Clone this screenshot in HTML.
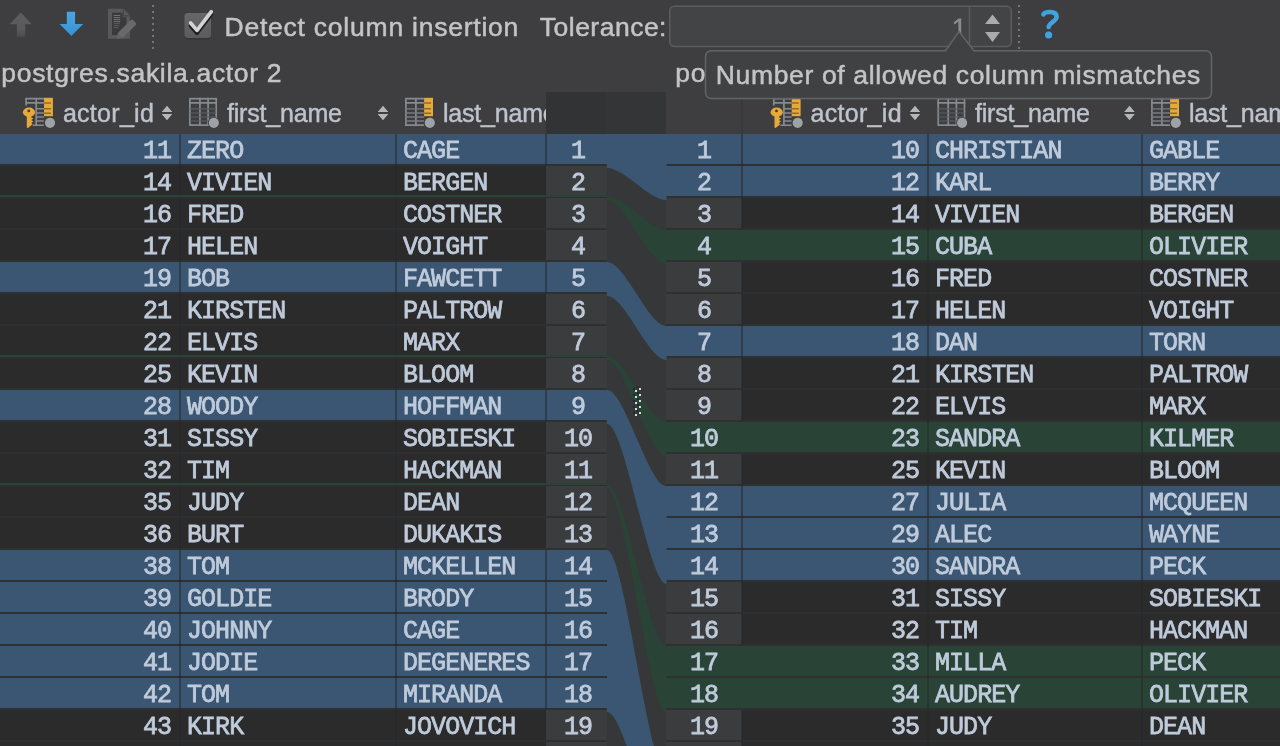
<!DOCTYPE html>
<html><head><meta charset="utf-8"><title>diff</title>
<style>
html,body{margin:0;padding:0;overflow:hidden}
body{width:1280px;height:746px;overflow:hidden;background:#3e3e40;position:relative;font-family:"Liberation Sans",sans-serif;color:#bbbbbb}
.a{position:absolute}
.t{position:absolute;white-space:nowrap;font-size:26.5px;line-height:30px;letter-spacing:.7px;color:#c4c4c4;-webkit-text-stroke:.5px #c4c4c4}
.h{position:absolute;white-space:nowrap;font-size:25px;line-height:30px;color:#bdc3cc;letter-spacing:-.2px;-webkit-text-stroke:.45px #bdc3cc}
.c{position:absolute;white-space:nowrap;font-family:"Liberation Mono",monospace;font-size:25px;line-height:30px;letter-spacing:-.95px;color:#bfcbdb;height:30px;margin-top:2.5px;transform:scaleY(1);transform-origin:0 21.65px;-webkit-text-stroke:.76px #bfcbdb}
.r{text-align:right}
.n{text-align:center;letter-spacing:-.9px}
.row{position:absolute;left:0;height:30px}
</style></head><body><div id="w" style="position:absolute;left:0;top:0;width:1280px;height:746px;overflow:hidden;will-change:transform">

<div class="a" style="left:0;top:134px;width:547px;height:612px;background:#2b2b2b"></div>
<div class="a" style="left:545.5px;top:134px;width:61.5px;height:612px;background:#3b3c3d"></div>
<div class="a" style="left:607px;top:134px;width:59px;height:612px;background:#363738"></div>
<div class="a" style="left:666px;top:134px;width:76px;height:612px;background:#3b3c3d"></div>
<div class="a" style="left:742px;top:134px;width:538px;height:612px;background:#2b2b2b"></div>
<div class="a" style="left:546px;top:92px;width:60px;height:42px;background:#323335"></div>
<div class="a" style="left:606px;top:92px;width:60px;height:42px;background:#343537"></div>
<div class="a" style="left:0;top:134px;width:607px;height:30px;background:#3a5672"></div>
<div class="a" style="left:0;top:262px;width:607px;height:30px;background:#3a5672"></div>
<div class="a" style="left:0;top:390px;width:607px;height:30px;background:#3a5672"></div>
<div class="a" style="left:0;top:550px;width:607px;height:30px;background:#3a5672"></div>
<div class="a" style="left:0;top:582px;width:607px;height:30px;background:#3a5672"></div>
<div class="a" style="left:0;top:614px;width:607px;height:30px;background:#3a5672"></div>
<div class="a" style="left:0;top:646px;width:607px;height:30px;background:#3a5672"></div>
<div class="a" style="left:0;top:678px;width:607px;height:30px;background:#3a5672"></div>
<div class="a" style="left:666px;top:134px;width:614px;height:30px;background:#3a5672"></div>
<div class="a" style="left:666px;top:166px;width:614px;height:30px;background:#3a5672"></div>
<div class="a" style="left:666px;top:230px;width:614px;height:30px;background:#294436"></div>
<div class="a" style="left:666px;top:326px;width:614px;height:30px;background:#3a5672"></div>
<div class="a" style="left:666px;top:422px;width:614px;height:30px;background:#294436"></div>
<div class="a" style="left:666px;top:486px;width:614px;height:30px;background:#3a5672"></div>
<div class="a" style="left:666px;top:518px;width:614px;height:30px;background:#3a5672"></div>
<div class="a" style="left:666px;top:550px;width:614px;height:30px;background:#3a5672"></div>
<div class="a" style="left:666px;top:646px;width:614px;height:30px;background:#294436"></div>
<div class="a" style="left:666px;top:678px;width:614px;height:30px;background:#294436"></div>
<div class="a" style="left:0;top:164px;width:547px;height:2px;background:#2f3031"></div>
<div class="a" style="left:742px;top:164px;width:538px;height:2px;background:#2f3031"></div>
<div class="a" style="left:545.5px;top:164px;width:61.5px;height:2px;background:#2f3031"></div>
<div class="a" style="left:666px;top:164px;width:76px;height:2px;background:#2f3031"></div>
<div class="a" style="left:0;top:196px;width:547px;height:2px;background:#2f3031"></div>
<div class="a" style="left:742px;top:196px;width:538px;height:2px;background:#2f3031"></div>
<div class="a" style="left:545.5px;top:196px;width:61.5px;height:2px;background:#2f3031"></div>
<div class="a" style="left:666px;top:196px;width:76px;height:2px;background:#2f3031"></div>
<div class="a" style="left:0;top:228px;width:547px;height:2px;background:#2f3031"></div>
<div class="a" style="left:742px;top:228px;width:538px;height:2px;background:#2f3031"></div>
<div class="a" style="left:545.5px;top:228px;width:61.5px;height:2px;background:#2f3031"></div>
<div class="a" style="left:666px;top:228px;width:76px;height:2px;background:#2f3031"></div>
<div class="a" style="left:0;top:260px;width:547px;height:2px;background:#2f3031"></div>
<div class="a" style="left:742px;top:260px;width:538px;height:2px;background:#2f3031"></div>
<div class="a" style="left:545.5px;top:260px;width:61.5px;height:2px;background:#2f3031"></div>
<div class="a" style="left:666px;top:260px;width:76px;height:2px;background:#2f3031"></div>
<div class="a" style="left:0;top:292px;width:547px;height:2px;background:#2f3031"></div>
<div class="a" style="left:742px;top:292px;width:538px;height:2px;background:#2f3031"></div>
<div class="a" style="left:545.5px;top:292px;width:61.5px;height:2px;background:#2f3031"></div>
<div class="a" style="left:666px;top:292px;width:76px;height:2px;background:#2f3031"></div>
<div class="a" style="left:0;top:324px;width:547px;height:2px;background:#2f3031"></div>
<div class="a" style="left:742px;top:324px;width:538px;height:2px;background:#2f3031"></div>
<div class="a" style="left:545.5px;top:324px;width:61.5px;height:2px;background:#2f3031"></div>
<div class="a" style="left:666px;top:324px;width:76px;height:2px;background:#2f3031"></div>
<div class="a" style="left:0;top:356px;width:547px;height:2px;background:#2f3031"></div>
<div class="a" style="left:742px;top:356px;width:538px;height:2px;background:#2f3031"></div>
<div class="a" style="left:545.5px;top:356px;width:61.5px;height:2px;background:#2f3031"></div>
<div class="a" style="left:666px;top:356px;width:76px;height:2px;background:#2f3031"></div>
<div class="a" style="left:0;top:388px;width:547px;height:2px;background:#2f3031"></div>
<div class="a" style="left:742px;top:388px;width:538px;height:2px;background:#2f3031"></div>
<div class="a" style="left:545.5px;top:388px;width:61.5px;height:2px;background:#2f3031"></div>
<div class="a" style="left:666px;top:388px;width:76px;height:2px;background:#2f3031"></div>
<div class="a" style="left:0;top:420px;width:547px;height:2px;background:#2f3031"></div>
<div class="a" style="left:742px;top:420px;width:538px;height:2px;background:#2f3031"></div>
<div class="a" style="left:545.5px;top:420px;width:61.5px;height:2px;background:#2f3031"></div>
<div class="a" style="left:666px;top:420px;width:76px;height:2px;background:#2f3031"></div>
<div class="a" style="left:0;top:452px;width:547px;height:2px;background:#2f3031"></div>
<div class="a" style="left:742px;top:452px;width:538px;height:2px;background:#2f3031"></div>
<div class="a" style="left:545.5px;top:452px;width:61.5px;height:2px;background:#2f3031"></div>
<div class="a" style="left:666px;top:452px;width:76px;height:2px;background:#2f3031"></div>
<div class="a" style="left:0;top:484px;width:547px;height:2px;background:#2f3031"></div>
<div class="a" style="left:742px;top:484px;width:538px;height:2px;background:#2f3031"></div>
<div class="a" style="left:545.5px;top:484px;width:61.5px;height:2px;background:#2f3031"></div>
<div class="a" style="left:666px;top:484px;width:76px;height:2px;background:#2f3031"></div>
<div class="a" style="left:0;top:516px;width:547px;height:2px;background:#2f3031"></div>
<div class="a" style="left:742px;top:516px;width:538px;height:2px;background:#2f3031"></div>
<div class="a" style="left:545.5px;top:516px;width:61.5px;height:2px;background:#2f3031"></div>
<div class="a" style="left:666px;top:516px;width:76px;height:2px;background:#2f3031"></div>
<div class="a" style="left:0;top:548px;width:547px;height:2px;background:#2f3031"></div>
<div class="a" style="left:742px;top:548px;width:538px;height:2px;background:#2f3031"></div>
<div class="a" style="left:545.5px;top:548px;width:61.5px;height:2px;background:#2f3031"></div>
<div class="a" style="left:666px;top:548px;width:76px;height:2px;background:#2f3031"></div>
<div class="a" style="left:0;top:580px;width:547px;height:2px;background:#2f3031"></div>
<div class="a" style="left:742px;top:580px;width:538px;height:2px;background:#2f3031"></div>
<div class="a" style="left:545.5px;top:580px;width:61.5px;height:2px;background:#2f3031"></div>
<div class="a" style="left:666px;top:580px;width:76px;height:2px;background:#2f3031"></div>
<div class="a" style="left:0;top:612px;width:547px;height:2px;background:#2f3031"></div>
<div class="a" style="left:742px;top:612px;width:538px;height:2px;background:#2f3031"></div>
<div class="a" style="left:545.5px;top:612px;width:61.5px;height:2px;background:#2f3031"></div>
<div class="a" style="left:666px;top:612px;width:76px;height:2px;background:#2f3031"></div>
<div class="a" style="left:0;top:644px;width:547px;height:2px;background:#2f3031"></div>
<div class="a" style="left:742px;top:644px;width:538px;height:2px;background:#2f3031"></div>
<div class="a" style="left:545.5px;top:644px;width:61.5px;height:2px;background:#2f3031"></div>
<div class="a" style="left:666px;top:644px;width:76px;height:2px;background:#2f3031"></div>
<div class="a" style="left:0;top:676px;width:547px;height:2px;background:#2f3031"></div>
<div class="a" style="left:742px;top:676px;width:538px;height:2px;background:#2f3031"></div>
<div class="a" style="left:545.5px;top:676px;width:61.5px;height:2px;background:#2f3031"></div>
<div class="a" style="left:666px;top:676px;width:76px;height:2px;background:#2f3031"></div>
<div class="a" style="left:0;top:708px;width:547px;height:2px;background:#2f3031"></div>
<div class="a" style="left:742px;top:708px;width:538px;height:2px;background:#2f3031"></div>
<div class="a" style="left:545.5px;top:708px;width:61.5px;height:2px;background:#2f3031"></div>
<div class="a" style="left:666px;top:708px;width:76px;height:2px;background:#2f3031"></div>
<div class="a" style="left:0;top:740px;width:547px;height:2px;background:#2f3031"></div>
<div class="a" style="left:742px;top:740px;width:538px;height:2px;background:#2f3031"></div>
<div class="a" style="left:545.5px;top:740px;width:61.5px;height:2px;background:#2f3031"></div>
<div class="a" style="left:666px;top:740px;width:76px;height:2px;background:#2f3031"></div>
<div class="a" style="left:0;top:772px;width:547px;height:2px;background:#2f3031"></div>
<div class="a" style="left:742px;top:772px;width:538px;height:2px;background:#2f3031"></div>
<div class="a" style="left:545.5px;top:772px;width:61.5px;height:2px;background:#2f3031"></div>
<div class="a" style="left:666px;top:772px;width:76px;height:2px;background:#2f3031"></div>
<div class="a" style="left:545px;top:134px;width:2px;height:32px;background:rgba(38,40,42,.55)"></div>
<div class="a" style="left:545px;top:262px;width:2px;height:32px;background:rgba(38,40,42,.55)"></div>
<div class="a" style="left:545px;top:390px;width:2px;height:32px;background:rgba(38,40,42,.55)"></div>
<div class="a" style="left:545px;top:550px;width:2px;height:32px;background:rgba(38,40,42,.55)"></div>
<div class="a" style="left:545px;top:582px;width:2px;height:32px;background:rgba(38,40,42,.55)"></div>
<div class="a" style="left:545px;top:614px;width:2px;height:32px;background:rgba(38,40,42,.55)"></div>
<div class="a" style="left:545px;top:646px;width:2px;height:32px;background:rgba(38,40,42,.55)"></div>
<div class="a" style="left:545px;top:678px;width:2px;height:32px;background:rgba(38,40,42,.55)"></div>
<div class="a" style="left:179px;top:134px;width:2px;height:612px;background:rgba(38,40,42,.55)"></div>
<div class="a" style="left:395px;top:134px;width:2px;height:612px;background:rgba(38,40,42,.55)"></div>
<div class="a" style="left:927px;top:134px;width:2px;height:612px;background:rgba(38,40,42,.55)"></div>
<div class="a" style="left:1141px;top:134px;width:2px;height:612px;background:rgba(38,40,42,.55)"></div>
<div class="a" style="left:741px;top:134px;width:2px;height:32px;background:rgba(38,40,42,.55)"></div>
<div class="a" style="left:741px;top:166px;width:2px;height:32px;background:rgba(38,40,42,.55)"></div>
<div class="a" style="left:741px;top:198px;width:2px;height:32px;background:rgba(38,40,42,.55)"></div>
<div class="a" style="left:741px;top:262px;width:2px;height:32px;background:rgba(38,40,42,.55)"></div>
<div class="a" style="left:741px;top:294px;width:2px;height:32px;background:rgba(38,40,42,.55)"></div>
<div class="a" style="left:741px;top:326px;width:2px;height:32px;background:rgba(38,40,42,.55)"></div>
<div class="a" style="left:741px;top:358px;width:2px;height:32px;background:rgba(38,40,42,.55)"></div>
<div class="a" style="left:741px;top:390px;width:2px;height:32px;background:rgba(38,40,42,.55)"></div>
<div class="a" style="left:741px;top:454px;width:2px;height:32px;background:rgba(38,40,42,.55)"></div>
<div class="a" style="left:741px;top:486px;width:2px;height:32px;background:rgba(38,40,42,.55)"></div>
<div class="a" style="left:741px;top:518px;width:2px;height:32px;background:rgba(38,40,42,.55)"></div>
<div class="a" style="left:741px;top:550px;width:2px;height:32px;background:rgba(38,40,42,.55)"></div>
<div class="a" style="left:741px;top:582px;width:2px;height:32px;background:rgba(38,40,42,.55)"></div>
<div class="a" style="left:741px;top:614px;width:2px;height:32px;background:rgba(38,40,42,.55)"></div>
<div class="a" style="left:741px;top:710px;width:2px;height:32px;background:rgba(38,40,42,.55)"></div>
<div class="a" style="left:741px;top:742px;width:2px;height:32px;background:rgba(38,40,42,.55)"></div>
<div class="a" style="left:0;top:195px;width:607px;height:2px;background:#2a4236"></div>
<div class="a" style="left:0;top:355px;width:607px;height:2px;background:#2a4236"></div>
<div class="a" style="left:0;top:483px;width:607px;height:2px;background:#2a4236"></div>
<svg class="a" style="left:0;top:0" width="1280" height="746" viewBox="0 0 1280 746">
<path fill="#3a5672" d="M607 134 C624.9 134 648.6 134 666.5 134 L666.5 200 C648.6 200 624.9 168 607 168Z"/>
<path fill="#294436" d="M607 196 C624.9 196 648.6 230 666.5 230 L666.5 264 C648.6 264 624.9 200 607 200Z"/>
<path fill="#3a5672" d="M607 262 C624.9 262 648.6 326 666.5 326 L666.5 360 C648.6 360 624.9 296 607 296Z"/>
<path fill="#294436" d="M607 356 C624.9 356 648.6 422 666.5 422 L666.5 456 C648.6 456 624.9 360 607 360Z"/>
<path fill="#3a5672" d="M607 390 C624.9 390 648.6 486 666.5 486 L666.5 584 C648.6 584 624.9 424 607 424Z"/>
<path fill="#294436" d="M607 484 C624.9 484 648.6 646 666.5 646 L666.5 712 C648.6 712 624.9 488 607 488Z"/>
<path fill="#3a5672" d="M607 550 C624.9 550 648.6 774 666.5 774 L666.5 840 C648.6 840 624.9 712 607 712Z"/>
</svg>
<div class="c r" style="left:0;top:134px;width:171px">11</div>
<div class="c" style="left:187px;top:134px">ZERO</div>
<div class="c" style="left:403px;top:134px;width:142px;overflow:hidden">CAGE</div>
<div class="c n" style="left:548px;top:134px;width:60px">1</div>
<div class="c r" style="left:0;top:166px;width:171px">14</div>
<div class="c" style="left:187px;top:166px">VIVIEN</div>
<div class="c" style="left:403px;top:166px;width:142px;overflow:hidden">BERGEN</div>
<div class="c n" style="left:548px;top:166px;width:60px">2</div>
<div class="c r" style="left:0;top:198px;width:171px">16</div>
<div class="c" style="left:187px;top:198px">FRED</div>
<div class="c" style="left:403px;top:198px;width:142px;overflow:hidden">COSTNER</div>
<div class="c n" style="left:548px;top:198px;width:60px">3</div>
<div class="c r" style="left:0;top:230px;width:171px">17</div>
<div class="c" style="left:187px;top:230px">HELEN</div>
<div class="c" style="left:403px;top:230px;width:142px;overflow:hidden">VOIGHT</div>
<div class="c n" style="left:548px;top:230px;width:60px">4</div>
<div class="c r" style="left:0;top:262px;width:171px">19</div>
<div class="c" style="left:187px;top:262px">BOB</div>
<div class="c" style="left:403px;top:262px;width:142px;overflow:hidden">FAWCETT</div>
<div class="c n" style="left:548px;top:262px;width:60px">5</div>
<div class="c r" style="left:0;top:294px;width:171px">21</div>
<div class="c" style="left:187px;top:294px">KIRSTEN</div>
<div class="c" style="left:403px;top:294px;width:142px;overflow:hidden">PALTROW</div>
<div class="c n" style="left:548px;top:294px;width:60px">6</div>
<div class="c r" style="left:0;top:326px;width:171px">22</div>
<div class="c" style="left:187px;top:326px">ELVIS</div>
<div class="c" style="left:403px;top:326px;width:142px;overflow:hidden">MARX</div>
<div class="c n" style="left:548px;top:326px;width:60px">7</div>
<div class="c r" style="left:0;top:358px;width:171px">25</div>
<div class="c" style="left:187px;top:358px">KEVIN</div>
<div class="c" style="left:403px;top:358px;width:142px;overflow:hidden">BLOOM</div>
<div class="c n" style="left:548px;top:358px;width:60px">8</div>
<div class="c r" style="left:0;top:390px;width:171px">28</div>
<div class="c" style="left:187px;top:390px">WOODY</div>
<div class="c" style="left:403px;top:390px;width:142px;overflow:hidden">HOFFMAN</div>
<div class="c n" style="left:548px;top:390px;width:60px">9</div>
<div class="c r" style="left:0;top:422px;width:171px">31</div>
<div class="c" style="left:187px;top:422px">SISSY</div>
<div class="c" style="left:403px;top:422px;width:142px;overflow:hidden">SOBIESKI</div>
<div class="c n" style="left:548px;top:422px;width:60px">10</div>
<div class="c r" style="left:0;top:454px;width:171px">32</div>
<div class="c" style="left:187px;top:454px">TIM</div>
<div class="c" style="left:403px;top:454px;width:142px;overflow:hidden">HACKMAN</div>
<div class="c n" style="left:548px;top:454px;width:60px">11</div>
<div class="c r" style="left:0;top:486px;width:171px">35</div>
<div class="c" style="left:187px;top:486px">JUDY</div>
<div class="c" style="left:403px;top:486px;width:142px;overflow:hidden">DEAN</div>
<div class="c n" style="left:548px;top:486px;width:60px">12</div>
<div class="c r" style="left:0;top:518px;width:171px">36</div>
<div class="c" style="left:187px;top:518px">BURT</div>
<div class="c" style="left:403px;top:518px;width:142px;overflow:hidden">DUKAKIS</div>
<div class="c n" style="left:548px;top:518px;width:60px">13</div>
<div class="c r" style="left:0;top:550px;width:171px">38</div>
<div class="c" style="left:187px;top:550px">TOM</div>
<div class="c" style="left:403px;top:550px;width:142px;overflow:hidden">MCKELLEN</div>
<div class="c n" style="left:548px;top:550px;width:60px">14</div>
<div class="c r" style="left:0;top:582px;width:171px">39</div>
<div class="c" style="left:187px;top:582px">GOLDIE</div>
<div class="c" style="left:403px;top:582px;width:142px;overflow:hidden">BRODY</div>
<div class="c n" style="left:548px;top:582px;width:60px">15</div>
<div class="c r" style="left:0;top:614px;width:171px">40</div>
<div class="c" style="left:187px;top:614px">JOHNNY</div>
<div class="c" style="left:403px;top:614px;width:142px;overflow:hidden">CAGE</div>
<div class="c n" style="left:548px;top:614px;width:60px">16</div>
<div class="c r" style="left:0;top:646px;width:171px">41</div>
<div class="c" style="left:187px;top:646px">JODIE</div>
<div class="c" style="left:403px;top:646px;width:142px;overflow:hidden">DEGENERES</div>
<div class="c n" style="left:548px;top:646px;width:60px">17</div>
<div class="c r" style="left:0;top:678px;width:171px">42</div>
<div class="c" style="left:187px;top:678px">TOM</div>
<div class="c" style="left:403px;top:678px;width:142px;overflow:hidden">MIRANDA</div>
<div class="c n" style="left:548px;top:678px;width:60px">18</div>
<div class="c r" style="left:0;top:710px;width:171px">43</div>
<div class="c" style="left:187px;top:710px">KIRK</div>
<div class="c" style="left:403px;top:710px;width:142px;overflow:hidden">JOVOVICH</div>
<div class="c n" style="left:548px;top:710px;width:60px">19</div>
<div class="c r" style="left:0;top:742px;width:171px">44</div>
<div class="c" style="left:187px;top:742px"></div>
<div class="c" style="left:403px;top:742px;width:142px;overflow:hidden"></div>
<div class="c n" style="left:548px;top:742px;width:60px">20</div>
<div class="c n" style="left:666px;top:134px;width:76px">1</div>
<div class="c r" style="left:742px;top:134px;width:177px">10</div>
<div class="c" style="left:935px;top:134px">CHRISTIAN</div>
<div class="c" style="left:1149px;top:134px">GABLE</div>
<div class="c n" style="left:666px;top:166px;width:76px">2</div>
<div class="c r" style="left:742px;top:166px;width:177px">12</div>
<div class="c" style="left:935px;top:166px">KARL</div>
<div class="c" style="left:1149px;top:166px">BERRY</div>
<div class="c n" style="left:666px;top:198px;width:76px">3</div>
<div class="c r" style="left:742px;top:198px;width:177px">14</div>
<div class="c" style="left:935px;top:198px">VIVIEN</div>
<div class="c" style="left:1149px;top:198px">BERGEN</div>
<div class="c n" style="left:666px;top:230px;width:76px">4</div>
<div class="c r" style="left:742px;top:230px;width:177px">15</div>
<div class="c" style="left:935px;top:230px">CUBA</div>
<div class="c" style="left:1149px;top:230px">OLIVIER</div>
<div class="c n" style="left:666px;top:262px;width:76px">5</div>
<div class="c r" style="left:742px;top:262px;width:177px">16</div>
<div class="c" style="left:935px;top:262px">FRED</div>
<div class="c" style="left:1149px;top:262px">COSTNER</div>
<div class="c n" style="left:666px;top:294px;width:76px">6</div>
<div class="c r" style="left:742px;top:294px;width:177px">17</div>
<div class="c" style="left:935px;top:294px">HELEN</div>
<div class="c" style="left:1149px;top:294px">VOIGHT</div>
<div class="c n" style="left:666px;top:326px;width:76px">7</div>
<div class="c r" style="left:742px;top:326px;width:177px">18</div>
<div class="c" style="left:935px;top:326px">DAN</div>
<div class="c" style="left:1149px;top:326px">TORN</div>
<div class="c n" style="left:666px;top:358px;width:76px">8</div>
<div class="c r" style="left:742px;top:358px;width:177px">21</div>
<div class="c" style="left:935px;top:358px">KIRSTEN</div>
<div class="c" style="left:1149px;top:358px">PALTROW</div>
<div class="c n" style="left:666px;top:390px;width:76px">9</div>
<div class="c r" style="left:742px;top:390px;width:177px">22</div>
<div class="c" style="left:935px;top:390px">ELVIS</div>
<div class="c" style="left:1149px;top:390px">MARX</div>
<div class="c n" style="left:666px;top:422px;width:76px">10</div>
<div class="c r" style="left:742px;top:422px;width:177px">23</div>
<div class="c" style="left:935px;top:422px">SANDRA</div>
<div class="c" style="left:1149px;top:422px">KILMER</div>
<div class="c n" style="left:666px;top:454px;width:76px">11</div>
<div class="c r" style="left:742px;top:454px;width:177px">25</div>
<div class="c" style="left:935px;top:454px">KEVIN</div>
<div class="c" style="left:1149px;top:454px">BLOOM</div>
<div class="c n" style="left:666px;top:486px;width:76px">12</div>
<div class="c r" style="left:742px;top:486px;width:177px">27</div>
<div class="c" style="left:935px;top:486px">JULIA</div>
<div class="c" style="left:1149px;top:486px">MCQUEEN</div>
<div class="c n" style="left:666px;top:518px;width:76px">13</div>
<div class="c r" style="left:742px;top:518px;width:177px">29</div>
<div class="c" style="left:935px;top:518px">ALEC</div>
<div class="c" style="left:1149px;top:518px">WAYNE</div>
<div class="c n" style="left:666px;top:550px;width:76px">14</div>
<div class="c r" style="left:742px;top:550px;width:177px">30</div>
<div class="c" style="left:935px;top:550px">SANDRA</div>
<div class="c" style="left:1149px;top:550px">PECK</div>
<div class="c n" style="left:666px;top:582px;width:76px">15</div>
<div class="c r" style="left:742px;top:582px;width:177px">31</div>
<div class="c" style="left:935px;top:582px">SISSY</div>
<div class="c" style="left:1149px;top:582px">SOBIESKI</div>
<div class="c n" style="left:666px;top:614px;width:76px">16</div>
<div class="c r" style="left:742px;top:614px;width:177px">32</div>
<div class="c" style="left:935px;top:614px">TIM</div>
<div class="c" style="left:1149px;top:614px">HACKMAN</div>
<div class="c n" style="left:666px;top:646px;width:76px">17</div>
<div class="c r" style="left:742px;top:646px;width:177px">33</div>
<div class="c" style="left:935px;top:646px">MILLA</div>
<div class="c" style="left:1149px;top:646px">PECK</div>
<div class="c n" style="left:666px;top:678px;width:76px">18</div>
<div class="c r" style="left:742px;top:678px;width:177px">34</div>
<div class="c" style="left:935px;top:678px">AUDREY</div>
<div class="c" style="left:1149px;top:678px">OLIVIER</div>
<div class="c n" style="left:666px;top:710px;width:76px">19</div>
<div class="c r" style="left:742px;top:710px;width:177px">35</div>
<div class="c" style="left:935px;top:710px">JUDY</div>
<div class="c" style="left:1149px;top:710px">DEAN</div>
<div class="c n" style="left:666px;top:742px;width:76px">20</div>
<div class="c r" style="left:742px;top:742px;width:177px">36</div>
<div class="c" style="left:935px;top:742px"></div>
<div class="c" style="left:1149px;top:742px"></div>
<svg class="a" style="left:0;top:0" width="1280" height="746" viewBox="0 0 1280 746"><rect x="637" y="386" width="2" height="2" fill="#20262a" opacity=".8"/><rect x="633" y="388" width="2" height="2" fill="#20262a" opacity=".8"/><rect x="637" y="392" width="2" height="2" fill="#20262a" opacity=".8"/><rect x="633" y="394" width="2" height="2" fill="#20262a" opacity=".8"/><rect x="637" y="398" width="2" height="2" fill="#20262a" opacity=".8"/><rect x="633" y="400" width="2" height="2" fill="#20262a" opacity=".8"/><rect x="637" y="404" width="2" height="2" fill="#20262a" opacity=".8"/><rect x="633" y="406" width="2" height="2" fill="#20262a" opacity=".8"/><rect x="637" y="410" width="2" height="2" fill="#20262a" opacity=".8"/><rect x="633" y="412" width="2" height="2" fill="#20262a" opacity=".8"/><rect x="639" y="388" width="2" height="2" fill="#d6dad8"/><rect x="635" y="390" width="2" height="2" fill="#d6dad8"/><rect x="639" y="394" width="2" height="2" fill="#d6dad8"/><rect x="635" y="396" width="2" height="2" fill="#d6dad8"/><rect x="639" y="400" width="2" height="2" fill="#d6dad8"/><rect x="635" y="402" width="2" height="2" fill="#d6dad8"/><rect x="639" y="406" width="2" height="2" fill="#d6dad8"/><rect x="635" y="408" width="2" height="2" fill="#d6dad8"/><rect x="639" y="412" width="2" height="2" fill="#d6dad8"/><rect x="635" y="414" width="2" height="2" fill="#d6dad8"/></svg>
<svg class="a" style="left:0;top:0" width="1280" height="140" viewBox="0 0 1280 140">
<g fill="none" stroke="#858b91" stroke-width="1.7"><path d="M25.2 98.7H43.9M26.099999999999998 97.8V105.5M25.9 102.9H43.9M36.2 97.8V126"/><path stroke-width="1.4" d="M36.2 108.8H43.9M36.2 113H43.9M36.2 117H43.9M36.2 121H43.9M32.7 125.3H43.9"/></g><rect x="44.0" y="97.8" width="8.9" height="18.4" fill="#e6aa3b"/><path d="M44.0 102.9H51.0M44.0 108.8H51.0M44.0 113.3H51.0" stroke="#8d6d2b" stroke-width="1.5"/><circle cx="50.0" cy="122.8" r="5.9" fill="#3d3d3f"/><circle cx="50.0" cy="122.8" r="5.1" fill="#9da2a6"/><ellipse cx="29.0" cy="112.2" rx="6.1" ry="4.7" fill="#e6aa3b"/><path fill="#e6aa3b" d="M26.799999999999997 115H31.2V117.2L33.3 118.6L31.2 120L33.3 121.6L31.2 123L32.5 124.3L27.599999999999998 128.2L26.799999999999997 127Z"/><circle cx="28.799999999999997" cy="110.9" r="1.4" fill="#4a3c22"/>
<path d="M167 105.8L172.3 112H161.7Z M167 120.2L161.7 114H172.3Z" fill="#b3b7bb"/>
<g fill="none" stroke="#858b91" stroke-width="1.7"><rect x="189.9" y="98.7" width="26.3" height="26.4"/><path d="M189 102.9H217M199.9 97.8V126M208.1 97.8V126"/><path stroke-width="1.2" stroke="#5a5e62" d="M190 108.8H216M190 113H216M190 117H216M190 121H216"/></g><circle cx="213.8" cy="122.8" r="5.9" fill="#3d3d3f"/><circle cx="213.8" cy="122.8" r="5.1" fill="#9da2a6"/>
<path d="M383 105.8L388.3 112H377.7Z M383 120.2L377.7 114H388.3Z" fill="#b3b7bb"/>
<g fill="none" stroke="#858b91" stroke-width="1.7"><path d="M405 98.7H424.2M405.9 97.8V126M405 125.1H424.2M405 102.9H424.2M415.9 97.8V126"/><path stroke-width="1.3" stroke="#777c81" d="M405 108.8H424.2M405 113H424.2M405 117H424.2M405 121H424.2"/></g><rect x="424.1" y="97.8" width="8.9" height="18.4" fill="#e6aa3b"/><path d="M424.1 102.9H431.1M424.1 108.8H431.1M424.1 113.3H431.1" stroke="#8d6d2b" stroke-width="1.5"/><circle cx="429.8" cy="122.8" r="5.9" fill="#3d3d3f"/><circle cx="429.8" cy="122.8" r="5.1" fill="#9da2a6"/>
<g fill="none" stroke="#858b91" stroke-width="1.7"><path d="M772.9 98.7H791.6M773.8000000000001 97.8V105.5M773.6 102.9H791.6M783.9 97.8V126"/><path stroke-width="1.4" d="M783.9 108.8H791.6M783.9 113H791.6M783.9 117H791.6M783.9 121H791.6M780.4 125.3H791.6"/></g><rect x="791.7" y="97.8" width="8.9" height="18.4" fill="#e6aa3b"/><path d="M791.7 102.9H798.7M791.7 108.8H798.7M791.7 113.3H798.7" stroke="#8d6d2b" stroke-width="1.5"/><circle cx="797.7" cy="122.8" r="5.9" fill="#3d3d3f"/><circle cx="797.7" cy="122.8" r="5.1" fill="#9da2a6"/><ellipse cx="776.7" cy="112.2" rx="6.1" ry="4.7" fill="#e6aa3b"/><path fill="#e6aa3b" d="M774.5 115H778.9V117.2L781.0 118.6L778.9 120L781.0 121.6L778.9 123L780.2 124.3L775.3000000000001 128.2L774.5 127Z"/><circle cx="776.5" cy="110.9" r="1.4" fill="#4a3c22"/>
<path d="M915 105.8L920.3 112H909.7Z M915 120.2L909.7 114H920.3Z" fill="#b3b7bb"/>
<g fill="none" stroke="#858b91" stroke-width="1.7"><rect x="938.1999999999999" y="98.7" width="26.3" height="26.4"/><path d="M937.3 102.9H965.3M948.1999999999999 97.8V126M956.4 97.8V126"/><path stroke-width="1.2" stroke="#5a5e62" d="M938.3 108.8H964.3M938.3 113H964.3M938.3 117H964.3M938.3 121H964.3"/></g><circle cx="962.1" cy="122.8" r="5.9" fill="#3d3d3f"/><circle cx="962.1" cy="122.8" r="5.1" fill="#9da2a6"/>
<path d="M1129.5 105.8L1134.8 112H1124.2Z M1129.5 120.2L1124.2 114H1134.8Z" fill="#b3b7bb"/>
<g fill="none" stroke="#858b91" stroke-width="1.7"><path d="M1151 98.7H1170.2M1151.9 97.8V126M1151 125.1H1170.2M1151 102.9H1170.2M1161.9 97.8V126"/><path stroke-width="1.3" stroke="#777c81" d="M1151 108.8H1170.2M1151 113H1170.2M1151 117H1170.2M1151 121H1170.2"/></g><rect x="1170.1" y="97.8" width="8.9" height="18.4" fill="#e6aa3b"/><path d="M1170.1 102.9H1177.1M1170.1 108.8H1177.1M1170.1 113.3H1177.1" stroke="#8d6d2b" stroke-width="1.5"/><circle cx="1175.8" cy="122.8" r="5.9" fill="#3d3d3f"/><circle cx="1175.8" cy="122.8" r="5.1" fill="#9da2a6"/>
</svg>
<div class="h" style="left:62.9px;top:98px;letter-spacing:.29px">actor_id</div>
<div class="h" style="left:227px;top:98px">first_name</div>
<div class="h" style="left:443px;top:98px;width:103px;overflow:hidden">last_name</div>
<div class="h" style="left:810.6px;top:98px;letter-spacing:.29px">actor_id</div>
<div class="h" style="left:975px;top:98px">first_name</div>
<div class="h" style="left:1189px;top:98px">last_name</div>
<div class="a" style="left:741px;top:100px;width:2px;height:34px;background:#3a3a3c"></div>
<div class="t" style="left:1.3px;top:58.2px;letter-spacing:.69px">postgres.sakila.actor 2</div>
<div class="t" style="left:675.3px;top:58.2px;letter-spacing:.69px">postgres.sakila.actor</div>
<svg class="a" style="left:0;top:0" width="160" height="50" viewBox="0 0 160 50">
<defs><linearGradient id="gu" x1="0" y1="0" x2="0" y2="1"><stop offset="0" stop-color="#5e5e60"/><stop offset=".7" stop-color="#59595b"/><stop offset="1" stop-color="#4c4c4e"/></linearGradient>
<linearGradient id="gd" x1="0" y1="0" x2="0" y2="1"><stop offset="0" stop-color="#4aa6e2"/><stop offset="1" stop-color="#3792d3"/></linearGradient></defs>
<path d="M20.8 12.4L31.9 24.2H25.2V36.8H16.9V24.2H9.5Z" fill="url(#gu)"/>
<path d="M66.8 11.8H75.1V24H83.2L71.4 36L59.6 24H66.8Z" fill="url(#gd)"/>
<path d="M108 8.8H123.6L129.9 15.2V38.8H108Z" fill="#59595b"/>
<path d="M112 12.8H122.4V17.2H126.4V35H112Z" fill="#3a3a3c"/>
<path d="M123.2 9.4V15.8H129.6" fill="none" stroke="#444446" stroke-width="1.2"/>
<path d="M113.7 15.5H120.2M113.7 17.6H120.2M113.7 19.6H120.2M113.7 21.6H120.2" stroke="#737375" stroke-width="1"/>
<path d="M113.7 23.6H120M113.7 25.6H119.4M113.7 27.5H118.6" stroke="#5a5a5c" stroke-width="1"/>
<g transform="translate(134.4,21.4) rotate(135.5)"><rect x="0" y="-3.5" width="20.5" height="7" rx="1.6" fill="#69696b"/><path d="M20 -3.5L25 0L20 3.5Z" fill="#626264"/></g>
</svg>
<svg class="a" style="left:151px;top:4px" width="4" height="46"><rect x="1" y="1" width="2" height="2" fill="#757577"/><rect x="1" y="7" width="2" height="2" fill="#757577"/><rect x="1" y="13" width="2" height="2" fill="#757577"/><rect x="1" y="19" width="2" height="2" fill="#757577"/><rect x="1" y="25" width="2" height="2" fill="#757577"/><rect x="1" y="31" width="2" height="2" fill="#757577"/><rect x="1" y="37" width="2" height="2" fill="#757577"/><rect x="1" y="43" width="2" height="2" fill="#757577"/></svg>
<svg class="a" style="left:1017px;top:4px" width="4" height="46"><rect x="1" y="1" width="2" height="2" fill="#757577"/><rect x="1" y="7" width="2" height="2" fill="#757577"/><rect x="1" y="13" width="2" height="2" fill="#757577"/><rect x="1" y="19" width="2" height="2" fill="#757577"/><rect x="1" y="25" width="2" height="2" fill="#757577"/><rect x="1" y="31" width="2" height="2" fill="#757577"/><rect x="1" y="37" width="2" height="2" fill="#757577"/><rect x="1" y="43" width="2" height="2" fill="#757577"/></svg>
<svg class="a" style="left:170px;top:0" width="60" height="50" viewBox="170 0 60 50">
<defs><linearGradient id="cb" x1="0" y1="0" x2="0" y2="1"><stop offset="0" stop-color="#666668"/><stop offset="1" stop-color="#5b5b5d"/></linearGradient></defs>
<rect x="184.2" y="14.4" width="27.2" height="25.2" rx="4" fill="#343436"/>
<rect x="184.4" y="13.1" width="26.8" height="25" rx="3.6" fill="url(#cb)"/>
<path d="M190.6 23L197 30.4L211.2 11.8" fill="none" stroke="#1d1d1f" stroke-width="3.9" stroke-linecap="round" stroke-linejoin="round" transform="translate(0,2.7)"/>
<path d="M190.6 23L197 30.4L211.2 11.8" fill="none" stroke="#d3d3d3" stroke-width="3.7" stroke-linecap="round" stroke-linejoin="round"/>
</svg>
<div class="t" style="left:224.5px;top:12.4px;letter-spacing:.77px">Detect column insertion</div>
<div class="t" style="left:539.8px;top:12.4px;letter-spacing:.49px">Tolerance:</div>
<svg class="a" style="left:660px;top:0" width="360" height="52" viewBox="660 0 360 52"><rect x="669.75" y="6.25" width="341.6" height="40.2" rx="4.6" fill="#434446" stroke="#5b5c5e" stroke-width="1.5"/><path d="M969.5 6.5V46.2" stroke="#5b5c5e" stroke-width="1.5"/></svg>
<svg class="a" style="left:980px;top:10px" width="26" height="36" viewBox="0 0 26 36"><path d="M12.5 4.5L20 14H5Z M12.5 32L5 22H20Z" fill="#a9abac"/></svg>
<svg class="a" style="left:945px;top:10px" width="24" height="32" viewBox="945 10 24 32"><path d="M953.6 22.6L958.6 18.4H961.2V37H958.4V21.6L954.6 24.6Z" fill="#8b8b8d"/></svg>
<svg class="a" style="left:1030px;top:0" width="40" height="46" viewBox="1030 0 40 46"><path d="M1043.4 14.4C1044.4 12.4 1046.8 12 1050 12C1054.4 12 1056.6 14 1056.6 16.8C1056.6 21.6 1048.7 22.4 1048.7 27" fill="none" stroke="#42a2de" stroke-width="4.6" stroke-linecap="round"/><circle cx="1048.6" cy="35" r="3.6" fill="#42a2de"/></svg>
<svg class="a" style="left:700px;top:28px" width="520" height="76" viewBox="0 0 520 76">
<path d="M10.5 22.8H245.5L259 3.5L274 22.8H505Q511.5 22.8 511.5 29V64Q511.5 70.5 505 70.5H12Q5.5 70.5 5.5 64V29Q5.5 22.8 12 22.8Z" fill="#404143" stroke="#626466" stroke-width="1.5"/>
</svg>
<div class="t" style="left:715.8px;top:59.5px;letter-spacing:.65px">Number of allowed column mismatches</div>
</div></body></html>
